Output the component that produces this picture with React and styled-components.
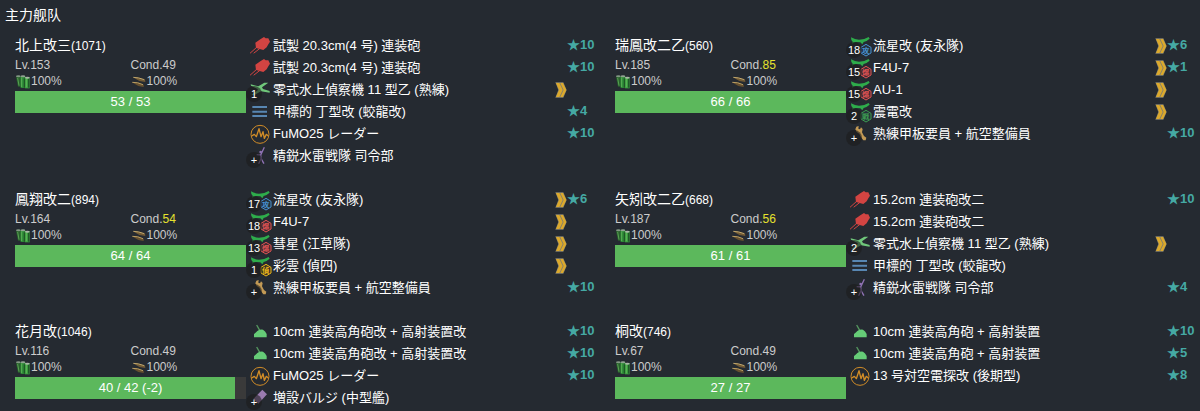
import React from "react";
import styled, { createGlobalStyle } from "styled-components";

const GlobalStyle = createGlobalStyle`
  * { box-sizing: border-box; }
  html { background: #252a31; }
  body {
    margin: 0;
    background: #252a31;
    color: #fff;
    font: 13px/22px "Liberation Sans", "Noto Sans CJK JP", sans-serif;
  }
`;

const Page = styled.main`
  padding-bottom: 2px;
`;

const FleetTitle = styled.h1`
  margin: 0;
  padding: 4px 5px 8px;
  font: 400 14px/22px "Liberation Sans", "Noto Sans CJK SC", sans-serif;
`;

const FleetGrid = styled.div`
  display: grid;
  grid-template-columns: 1fr 1fr;
  row-gap: 21px;
`;

const Ship = styled.article`
  display: flex;
  align-items: flex-start;
  min-width: 0;
  padding-left: 15px;
`;

const Stats = styled.div`
  flex: none;
  width: 40%;
  padding-right: 3px;
`;

const ShipName = styled.h2`
  margin: 0;
  font-size: 14px;
  font-weight: 400;
  line-height: 22px;
  white-space: nowrap;
`;

const ShipId = styled.span`
  font-size: 12px;
`;

const StatGrid = styled.div`
  display: grid;
  grid-template-columns: 1fr 1fr;
  padding-bottom: 2px;
  color: #ccc;
  font-size: 12px;
  line-height: 16px;
`;

const Stat = styled.span`
  display: flex;
  align-items: center;
  gap: 1px;
  height: 16px;
`;

const Cond = styled.span`
  color: ${(p) => (p.$high ? "#e6e22e" : "inherit")};
`;

const HpTrack = styled.div`
  display: grid;
  height: 22px;
  background: #3a3a3a;
`;

const HpFill = styled.div`
  grid-area: 1 / 1;
  background: #5cb85c;
`;

const HpText = styled.span`
  grid-area: 1 / 1;
  text-align: center;
`;

const EquipList = styled.ul`
  flex: 1;
  min-width: 0;
  margin: 0;
  padding: 1px 0 0;
  list-style: none;
`;

const EquipRow = styled.li`
  display: flex;
  align-items: center;
  height: 22px;
`;

const IconBox = styled.span`
  position: relative;
  flex: none;
  width: 24px;
  height: 22px;
  padding: 1px 0 0 1px;
`;

const Count = styled.span`
  position: absolute;
  left: -3px;
  bottom: -1px;
  width: 16px;
  height: 16px;
  border-radius: 50%;
  background: rgba(28, 28, 28, 0.6);
  font-size: 11px;
  line-height: 16px;
  text-align: center;
`;

const EquipName = styled.span`
  flex: 1;
  white-space: nowrap;
`;

const Level = styled.span`
  width: 33px;
  padding-bottom: 2px;
  color: #45a9a4;
  font-weight: 700;
`;

const Drawing = styled.svg`
  display: block;
  flex: none;
  overflow: visible;
`;

const TypeMark = styled.text`
  font: 700 22px "Noto Sans CJK JP", sans-serif;
  text-anchor: middle;
`;

function AircraftIcon({ color, fill = "#26313b", mark }) {
  return (
    <>
      <path
        d="M3 4 Q15 11 27 11 Q44 11 56 3 L59 8 Q50 16 41 18 L37 25 L31 19 L17 18 L6 23 L8 17 L4 12Z"
        fill="#2eac4b"
      />
      <path d="M48 25 L63 34 V51 L48 60 L33 51 V34Z" fill={fill} stroke={color} strokeWidth="3" />
      <TypeMark x="47" y="51" fill={color}>{mark}</TypeMark>
    </>
  );
}

const equipIcons = {
  gun: (
    <>
      <path d="M1 51 L21 33 M12 51 L30 37" stroke="#d34442" strokeWidth="3" strokeLinecap="round" />
      <path d="M16 20 L31 10 L42 3 L47 7 L55 7 L60 17 L55 25 L50 34 L40 42 L29 39 L18 36Z" fill="#d34442" />
    </>
  ),
  highAngle: (
    <>
      <path d="M20 9 L29 25" stroke="#54965f" strokeWidth="4" />
      <path d="M12 46 V36 Q18 32 22 27 Q29 22 39 23 Q46 27 50 36 V46Z" fill="#66cc77" />
    </>
  ),
  seaplane: (
    <path
      d="M2 13 L25 19 L43 8 L55 8 L36 22 L39 27 L59 33 L59 38 L33 34 L13 45 L4 45 L23 31 L23 27 L3 17Z"
      fill="#70c77b"
    />
  ),
  midgetSub: <path d="M7 15 H51 M7 29 H51 M7 42 H51" stroke="#5887b3" strokeWidth="6" />,
  radar: (
    <>
      <circle cx="30" cy="31" r="27" fill="none" stroke="#d18c27" strokeWidth="3" />
      <path
        d="M5 36 L13 31 L19 38 L27 14 L33 38 L39 23 L43 43 L49 31 L55 36"
        fill="none"
        stroke="#d18c27"
        strokeWidth="4"
        strokeLinejoin="round"
      />
    </>
  ),
  command: (
    <>
      <circle cx="32" cy="18" r="4" fill="#8f72b4" />
      <path
        d="M20 26 L32 27 L43 4 M32 26 L33 38 L42 53 M33 38 L26 53"
        fill="none"
        stroke="#8f72b4"
        strokeWidth="4"
      />
    </>
  ),
  personnel: (
    <path
      d="M19 8 L26 6 L25 14 L30 16 L33 10 L38 15 L36 25 L42 36 L49 41 L47 49 L40 49 L33 40 L28 29 L20 24 L16 16Z"
      fill="#c39a55"
    />
  ),
  bulge: <path d="M37 5 L51 19 L25 47 L10 33Z" fill="#9a7bb0" />,
  torpedoBomber: <AircraftIcon color="#4790d0" mark="攻" />,
  bomber: <AircraftIcon color="#e25353" fill="#3b2c33" mark="爆" />,
  fighter: <AircraftIcon color="#3c9c50" mark="戦" />,
  scout: <AircraftIcon color="#efb819" fill="#3a3524" mark="偵" />,
};

function FuelIcon() {
  return (
    <Drawing width="15" height="15" viewBox="0 0 45 45" aria-hidden="true">
      <path d="M3 8 L16 5 L20 38 H9Z" fill="#285f2c" />
      <path d="M16 7 H31 V42 H17Z" fill="#2c8a36" />
      <path d="M30 9 H44 V43 H30Z" fill="#399b3f" />
      <path d="M20 10 V39 M34 13 V40 M8 12 L12 35" stroke="#72c568" strokeWidth="2" />
      <path d="M28 13 V41 M41 13 V41" stroke="#1c4c24" strokeWidth="3" />
      <ellipse cx="10" cy="7" rx="7" ry="3" fill="#839885" />
      <ellipse cx="24" cy="7" rx="7" ry="3" fill="#92a493" />
      <ellipse cx="37" cy="11" rx="7" ry="3" fill="#a7b6a5" />
    </Drawing>
  );
}

function AmmoIcon() {
  return (
    <Drawing width="15" height="15" viewBox="0 0 45 45" aria-hidden="true">
      <path d="M6 10 Q22 10 42 17 L43 24 L25 21Z" fill="#725b35" />
      <path d="M7 10 Q22 10 40 17" fill="none" stroke="#c0a66c" strokeWidth="3" />
      <path d="M3 25 Q20 24 38 32 L38 39 L22 36Z" fill="#66502f" />
      <path d="M4 25 Q20 24 36 32" fill="none" stroke="#b99d62" strokeWidth="3" />
    </Drawing>
  );
}

function ProficiencyIcon() {
  return (
    <Drawing width="12" height="16" viewBox="0 0 36 48" role="img" aria-label="熟練度 7">
      <path d="M1 1 H25 L35 24 L25 47 H1 L10 24Z" fill="#85806c" />
      <path d="M3 3 H13 L23 24 L13 45 H3 L12 24Z M16 3 H24 L34 24 L24 45 H16 L26 24Z" fill="#dca92c" />
    </Drawing>
  );
}

function Equipment({ icon, name, count, level, skilled }) {
  return (
    <EquipRow>
      <IconBox>
        <Drawing width="20" height="20" viewBox="0 0 60 60" aria-hidden="true">
          {equipIcons[icon]}
        </Drawing>
        {count && <Count>{count}</Count>}
      </IconBox>
      <EquipName>{name}</EquipName>
      {skilled && <ProficiencyIcon />}
      <Level>{level && `★${level}`}</Level>
    </EquipRow>
  );
}

function ShipCard({ name, id, lv, cond, hp, maxHp, equips }) {
  const damage = maxHp - hp;
  return (
    <Ship>
      <Stats>
        <ShipName>
          {name}
          <ShipId>({id})</ShipId>
        </ShipName>
        <StatGrid>
          <Stat>Lv.{lv}</Stat>
          <Stat as="div">
            <span>Cond.<Cond $high={cond > 49}>{cond}</Cond></span>
          </Stat>
          <Stat><FuelIcon />100%</Stat>
          <Stat><AmmoIcon />100%</Stat>
        </StatGrid>
        <HpTrack>
          <HpFill style={{ width: `${(hp / maxHp) * 100}%` }} />
          <HpText>{`${hp} / ${maxHp}${damage ? ` (-${damage})` : ""}`}</HpText>
        </HpTrack>
      </Stats>
      <EquipList>
        {equips.map(([icon, equipName, extra], i) => (
          <Equipment key={i} icon={icon} name={equipName} {...extra} />
        ))}
      </EquipList>
    </Ship>
  );
}

const ships = [
  {
    name: "北上改三", id: 1071, lv: 153, cond: 49, hp: 53, maxHp: 53,
    equips: [
      ["gun", "試製 20.3cm(4 号) 連装砲", { level: 10 }],
      ["gun", "試製 20.3cm(4 号) 連装砲", { level: 10 }],
      ["seaplane", "零式水上偵察機 11 型乙 (熟練)", { count: "1", skilled: true }],
      ["midgetSub", "甲標的 丁型改 (蛟龍改)", { level: 4 }],
      ["radar", "FuMO25 レーダー", { level: 10 }],
      ["command", "精鋭水雷戦隊 司令部", { count: "+" }],
    ],
  },
  {
    name: "瑞鳳改二乙", id: 560, lv: 185, cond: 85, hp: 66, maxHp: 66,
    equips: [
      ["torpedoBomber", "流星改 (友永隊)", { count: "18", level: 6, skilled: true }],
      ["bomber", "F4U-7", { count: "15", level: 1, skilled: true }],
      ["bomber", "AU-1", { count: "15", skilled: true }],
      ["fighter", "震電改", { count: "2", skilled: true }],
      ["personnel", "熟練甲板要員 + 航空整備員", { count: "+", level: 10 }],
    ],
  },
  {
    name: "鳳翔改二", id: 894, lv: 164, cond: 54, hp: 64, maxHp: 64,
    equips: [
      ["torpedoBomber", "流星改 (友永隊)", { count: "17", level: 6, skilled: true }],
      ["bomber", "F4U-7", { count: "18", skilled: true }],
      ["bomber", "彗星 (江草隊)", { count: "13", skilled: true }],
      ["scout", "彩雲 (偵四)", { count: "1", skilled: true }],
      ["personnel", "熟練甲板要員 + 航空整備員", { count: "+", level: 10 }],
    ],
  },
  {
    name: "矢矧改二乙", id: 668, lv: 187, cond: 56, hp: 61, maxHp: 61,
    equips: [
      ["gun", "15.2cm 連装砲改二", { level: 10 }],
      ["gun", "15.2cm 連装砲改二"],
      ["seaplane", "零式水上偵察機 11 型乙 (熟練)", { count: "2", skilled: true }],
      ["midgetSub", "甲標的 丁型改 (蛟龍改)"],
      ["command", "精鋭水雷戦隊 司令部", { count: "+", level: 4 }],
    ],
  },
  {
    name: "花月改", id: 1046, lv: 116, cond: 49, hp: 40, maxHp: 42,
    equips: [
      ["highAngle", "10cm 連装高角砲改 + 高射装置改", { level: 10 }],
      ["highAngle", "10cm 連装高角砲改 + 高射装置改", { level: 10 }],
      ["radar", "FuMO25 レーダー", { level: 10 }],
      ["bulge", "増設バルジ (中型艦)", { count: "+" }],
    ],
  },
  {
    name: "桐改", id: 746, lv: 67, cond: 49, hp: 27, maxHp: 27,
    equips: [
      ["highAngle", "10cm 連装高角砲 + 高射装置", { level: 10 }],
      ["highAngle", "10cm 連装高角砲 + 高射装置", { level: 5 }],
      ["radar", "13 号対空電探改 (後期型)", { level: 8 }],
    ],
  },
];

export default function App() {
  return (
    <Page>
      <GlobalStyle />
      <FleetTitle lang="zh-CN">主力舰队</FleetTitle>
      <FleetGrid lang="ja">
        {ships.map((ship) => (
          <ShipCard key={ship.id} {...ship} />
        ))}
      </FleetGrid>
    </Page>
  );
}
